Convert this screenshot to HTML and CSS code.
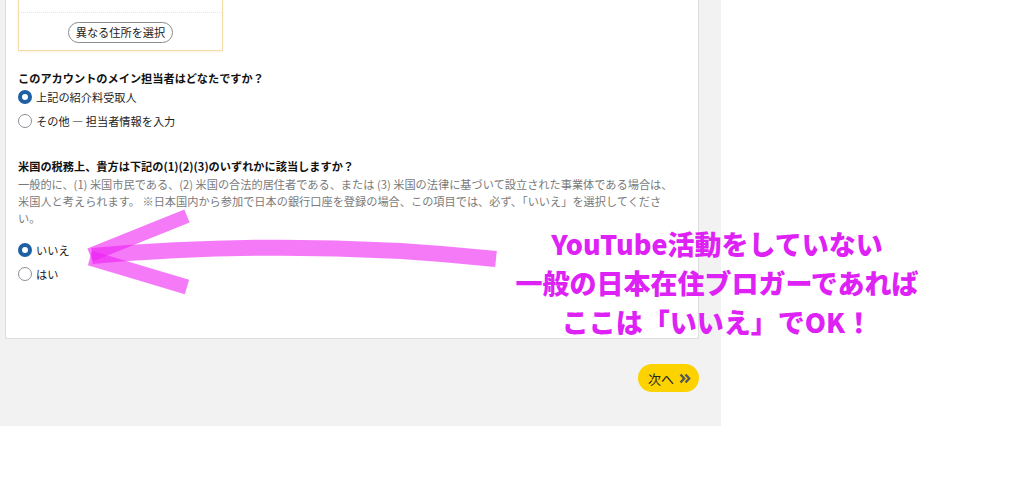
FILE: index.html
```html
<!DOCTYPE html>
<html lang="ja">
<head>
<meta charset="utf-8">
<link rel="stylesheet" href="styles.css">
</head>
<body>
<div class="page">
  <div class="card">
    <div class="addr-box">
      <div class="addr-sep"></div>
      <div class="addr-actions"><button class="pill-btn">異なる住所を選択</button></div>
    </div>

    <div class="question q1">このアカウントのメイン担当者はどなたですか？</div>
    <div class="options">
      <label class="opt"><span class="radio checked"></span><span>上記の紹介料受取人</span></label>
      <label class="opt"><span class="radio"></span><span>その他 — 担当者情報を入力</span></label>
    </div>

    <div class="question q2">米国の税務上、貴方は下記の(1)(2)(3)のいずれかに該当しますか？</div>
    <p class="desc">一般的に、(1) 米国市民である、(2) 米国の合法的居住者である、または (3) 米国の法律に基づいて設立された事業体である場合は、米国人と考えられます。 ※日本国内から参加で日本の銀行口座を登録の場合、この項目では、必ず、「いいえ」を選択してください。</p>
    <div class="options opts2">
      <label class="opt"><span class="radio checked"></span><span>いいえ</span></label>
      <label class="opt"><span class="radio"></span><span>はい</span></label>
    </div>
  </div>
  <div class="footer">
    <button class="next-btn">次へ<svg class="chev" width="12" height="11" viewBox="0 0 12 11"><path d="M1.5 1.5 L5.2 5.5 L1.5 9.5 M6.5 1.5 L10.2 5.5 L6.5 9.5" fill="none" stroke="#555" stroke-width="2.3"/></svg></button>
  </div>
</div>

<svg class="arrow" width="1024" height="502" viewBox="0 0 1024 502">
  <g fill="none" stroke="#ee22f4" stroke-opacity="0.6" stroke-linecap="butt">
    <path d="M92 256 Q 300 238 496 259" stroke-width="16"/>
    <path d="M90 255 L187 216" stroke-width="14"/>
    <path d="M90 258 L187 287" stroke-width="15"/>
  </g>
</svg>

<div class="note">YouTube活動をしていない<br>一般の日本在住ブロガーであれば<br>ここは「いいえ」でOK！</div>
</body>
</html>
```

FILE: styles.css
```css
html, body {
  margin: 0;
  padding: 0;
  background: #ffffff;
}
body {
  font-family: "Noto Sans CJK JP", "Noto Sans", sans-serif;
  position: relative;
  width: 1024px;
  height: 502px;
  overflow: hidden;
}
.page {
  width: 721px;
  height: 426px;
  background: #f2f2f2;
  padding-left: 5px;
  box-sizing: border-box;
}
.card {
  width: 694px;
  height: 339px;
  box-sizing: border-box;
  background: #ffffff;
  border: 1px solid #dedede;
  border-top: none;
  padding: 0 12px;
  display: flex;
  flex-direction: column;
}
.addr-box {
  width: 205px;
  height: 51px;
  box-sizing: border-box;
  border: 1px solid #f3dca8;
  border-top: none;
  box-shadow: 0 1px 2px rgba(240, 200, 120, 0.25);
}
.addr-sep {
  margin-top: 12px;
  border-top: 1px dotted #e4e4e4;
}
.addr-actions {
  display: flex;
  justify-content: center;
  padding-top: 9px;
}
.pill-btn {
  font-family: inherit;
  font-size: 11.2px;
  color: #222;
  background: #fff;
  border: 1px solid #888c8c;
  border-radius: 11px;
  height: 21px;
  width: 105px;
  padding: 0;
  line-height: 19px;
}
.question {
  font-weight: 700;
  font-size: 11.2px;
  line-height: 18px;
  color: #111;
}
.q1 { margin-top: 18px; }
.q2 { margin-top: 26px; }
.options {
  display: flex;
  flex-direction: column;
  gap: 4px;
}
.opts2 { margin-top: 13px; }
.opt {
  display: flex;
  align-items: center;
  gap: 4px;
  height: 20px;
  font-size: 11.2px;
  color: #222;
}
.radio {
  width: 14px;
  height: 14px;
  box-sizing: border-box;
  border-radius: 50%;
  border: 1px solid #8d9096;
  background: #fff;
  flex: none;
}
.radio.checked {
  border: 4px solid #1f5fa3;
}
.desc {
  margin: 1px 0 0;
  font-size: 11.2px;
  line-height: 17px;
  color: #7a7a7a;
  width: 660px;
}
.footer {
  width: 694px;
  display: flex;
  justify-content: flex-end;
  margin-top: 25px;
}
.next-btn {
  width: 61px;
  height: 28px;
  border-radius: 14px;
  border: none;
  background: #fcd200;
  font-family: inherit;
  font-size: 13px;
  color: #222;
  display: flex;
  align-items: center;
  justify-content: center;
  gap: 5px;
  padding: 0 0 0 2px;
}
.chev { display: block; }
.arrow {
  position: absolute;
  left: 0;
  top: 0;
  pointer-events: none;
}
.note {
  position: absolute;
  left: 467px;
  top: 224px;
  width: 500px;
  text-align: center;
  font-family: "Noto Sans CJK JP", sans-serif;
  font-weight: 900;
  font-size: 27px;
  line-height: 39px;
  color: #de22f5;
}
```
